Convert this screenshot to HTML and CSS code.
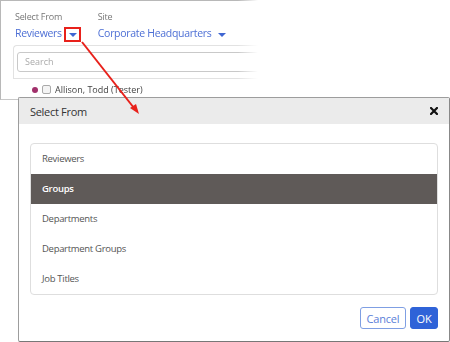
FILE: index.html
```
<!DOCTYPE html>
<html>
<head>
    <title>Select From</title>
    <link rel="stylesheet" href="styles.css">
</head>
<body>
    <div class="page">
        <div class="shot">
            <div class="filters">
                <div class="filter">
                    <div class="filter-label">Select From</div>
                    <div class="filter-value">Reviewers <span class="caret"></span></div>
                </div>
                <div class="filter">
                    <div class="filter-label">Site</div>
                    <div class="filter-value">Corporate Headquarters <span class="caret"></span></div>
                </div>
            </div>
            <div class="panel">
                <div class="search">Search</div>
            </div>
            <div class="person">
                <span class="dot"></span>
                <span class="check"></span>
                <span>Allison, Todd (Tester)</span>
            </div>
        </div>

        <div class="highlight"></div>
        <svg class="pointer" width="450" height="342" viewBox="0 0 450 342">
            <line x1="82" y1="42" x2="134" y2="108" stroke="#e8211b" stroke-width="2"/>
            <polygon points="139,114 130,108 136,104" fill="#e8211b"/>
        </svg>

        <div class="modal">
            <div class="modal-header">
                <span>Select From</span>
                <svg class="close" width="8" height="8" viewBox="0 0 8 8">
                    <path d="M1 1 L7 7 M7 1 L1 7" stroke="#111" stroke-width="2.2" stroke-linecap="square"/>
                </svg>
            </div>
            <div class="modal-body">
                <div class="options">
                    <div class="option">Reviewers</div>
                    <div class="option selected">Groups</div>
                    <div class="option">Departments</div>
                    <div class="option">Department Groups</div>
                    <div class="option">Job Titles</div>
                </div>
            </div>
            <div class="modal-footer">
                <button class="btn btn-cancel">Cancel</button>
                <button class="btn btn-ok">OK</button>
            </div>
        </div>
    </div>
</body>
</html>
```

FILE: styles.css
```
body {
    margin: 0;
    padding: 0;
    background: #fff;
    font-family: 'Open Sans', 'Noto Sans', sans-serif;
    color: #333;
}

.page {
    position: relative;
    width: 450px;
    height: 342px;
    overflow: hidden;
}

/* faded screenshot behind the dialog */
.shot {
    width: 260px;
    height: 100px;
    border-top: 1px solid #b8b8b8;
    border-left: 1px solid #b8b8b8;
    border-bottom: 1px solid #c8c8c8;
    box-sizing: border-box;
    -webkit-mask-image: linear-gradient(to right, #000 238px, transparent 258px);
    mask-image: linear-gradient(to right, #000 238px, transparent 258px);
}

.filters {
    display: flex;
    gap: 21px;
    padding: 10px 0 0 14px;
    white-space: nowrap;
}

.filter {
    flex-shrink: 0;
}

.filter-label {
    font-size: 9px;
    line-height: 12px;
    letter-spacing: -0.2px;
    color: #777;
}

.filter-value {
    font-size: 10.5px;
    line-height: 16px;
    letter-spacing: -0.3px;
    color: #4d6fd5;
    display: flex;
    align-items: center;
    gap: 7px;
    margin-top: 2px;
}

.caret {
    width: 0;
    height: 0;
    border-left: 4px solid transparent;
    border-right: 4px solid transparent;
    border-top: 4px solid #3f66d2;
    margin-top: 3px;
}

.panel {
    margin: 4px 0 0 12px;
    padding: 6px 0 6px 3px;
    border: 1px solid #e2e2e2;
    border-right: none;
    border-radius: 4px 0 0 0;
}

.search {
    height: 18px;
    border: 1px solid #c9c9c9;
    border-radius: 3px;
    font-size: 9px;
    line-height: 18px;
    color: #aaa;
    padding-left: 7px;
}

.person {
    display: flex;
    align-items: center;
    gap: 4px;
    padding: 4px 0 0 31px;
    font-size: 9px;
    line-height: 13px;
    color: #444;
}

.dot {
    width: 6px;
    height: 6px;
    border-radius: 50%;
    background: #a1306b;
}

.check {
    width: 7px;
    height: 7px;
    border: 1px solid #aaa;
    border-radius: 2px;
    background: #f4f4f4;
}

/* annotation */
.highlight {
    position: absolute;
    left: 64px;
    top: 27px;
    width: 13px;
    height: 11px;
    border: 2px solid #e8211b;
}

.pointer {
    position: absolute;
    left: 0;
    top: 0;
    z-index: 2;
}

/* dialog */
.modal {
    position: absolute;
    left: 18px;
    top: 97px;
    width: 432px;
    height: 245px;
    box-sizing: border-box;
    border: 1px solid #9d9d9d;
    border-bottom-color: #777;
    border-right-color: #888;
    border-radius: 2px;
    background: #fff;
    display: flex;
    flex-direction: column;
    z-index: 1;
}

.modal-header {
    height: 26px;
    background: #ebebeb;
    display: flex;
    align-items: center;
    justify-content: space-between;
    padding: 0 11px 0 11px;
    font-size: 11px;
    letter-spacing: -0.3px;
    color: #333;
}

.modal-body {
    padding: 19px 11px 0 11px;
}

.options {
    border: 1px solid #dedede;
    border-radius: 4px;
    overflow: hidden;
}

.option {
    height: 30px;
    line-height: 30px;
    padding-left: 11px;
    font-size: 9.5px;
    letter-spacing: -0.3px;
    color: #555;
}

.option.selected {
    background: #5f5a58;
    color: #fff;
    font-weight: 600;
}

.modal-footer {
    display: flex;
    justify-content: flex-end;
    gap: 4px;
    padding: 12px 11px 0 0;
}

.btn {
    height: 22px;
    border-radius: 3px;
    font-family: 'Open Sans', 'Noto Sans', sans-serif;
    font-size: 11px;
    letter-spacing: -0.2px;
    padding: 0;
    cursor: pointer;
}

.btn-cancel {
    width: 46px;
    background: #fff;
    border: 1px solid #7f9fe3;
    color: #5a7ed8;
}

.btn-ok {
    width: 28px;
    background: #2f63d8;
    border: 1px solid #2f63d8;
    color: #fff;
}
```
